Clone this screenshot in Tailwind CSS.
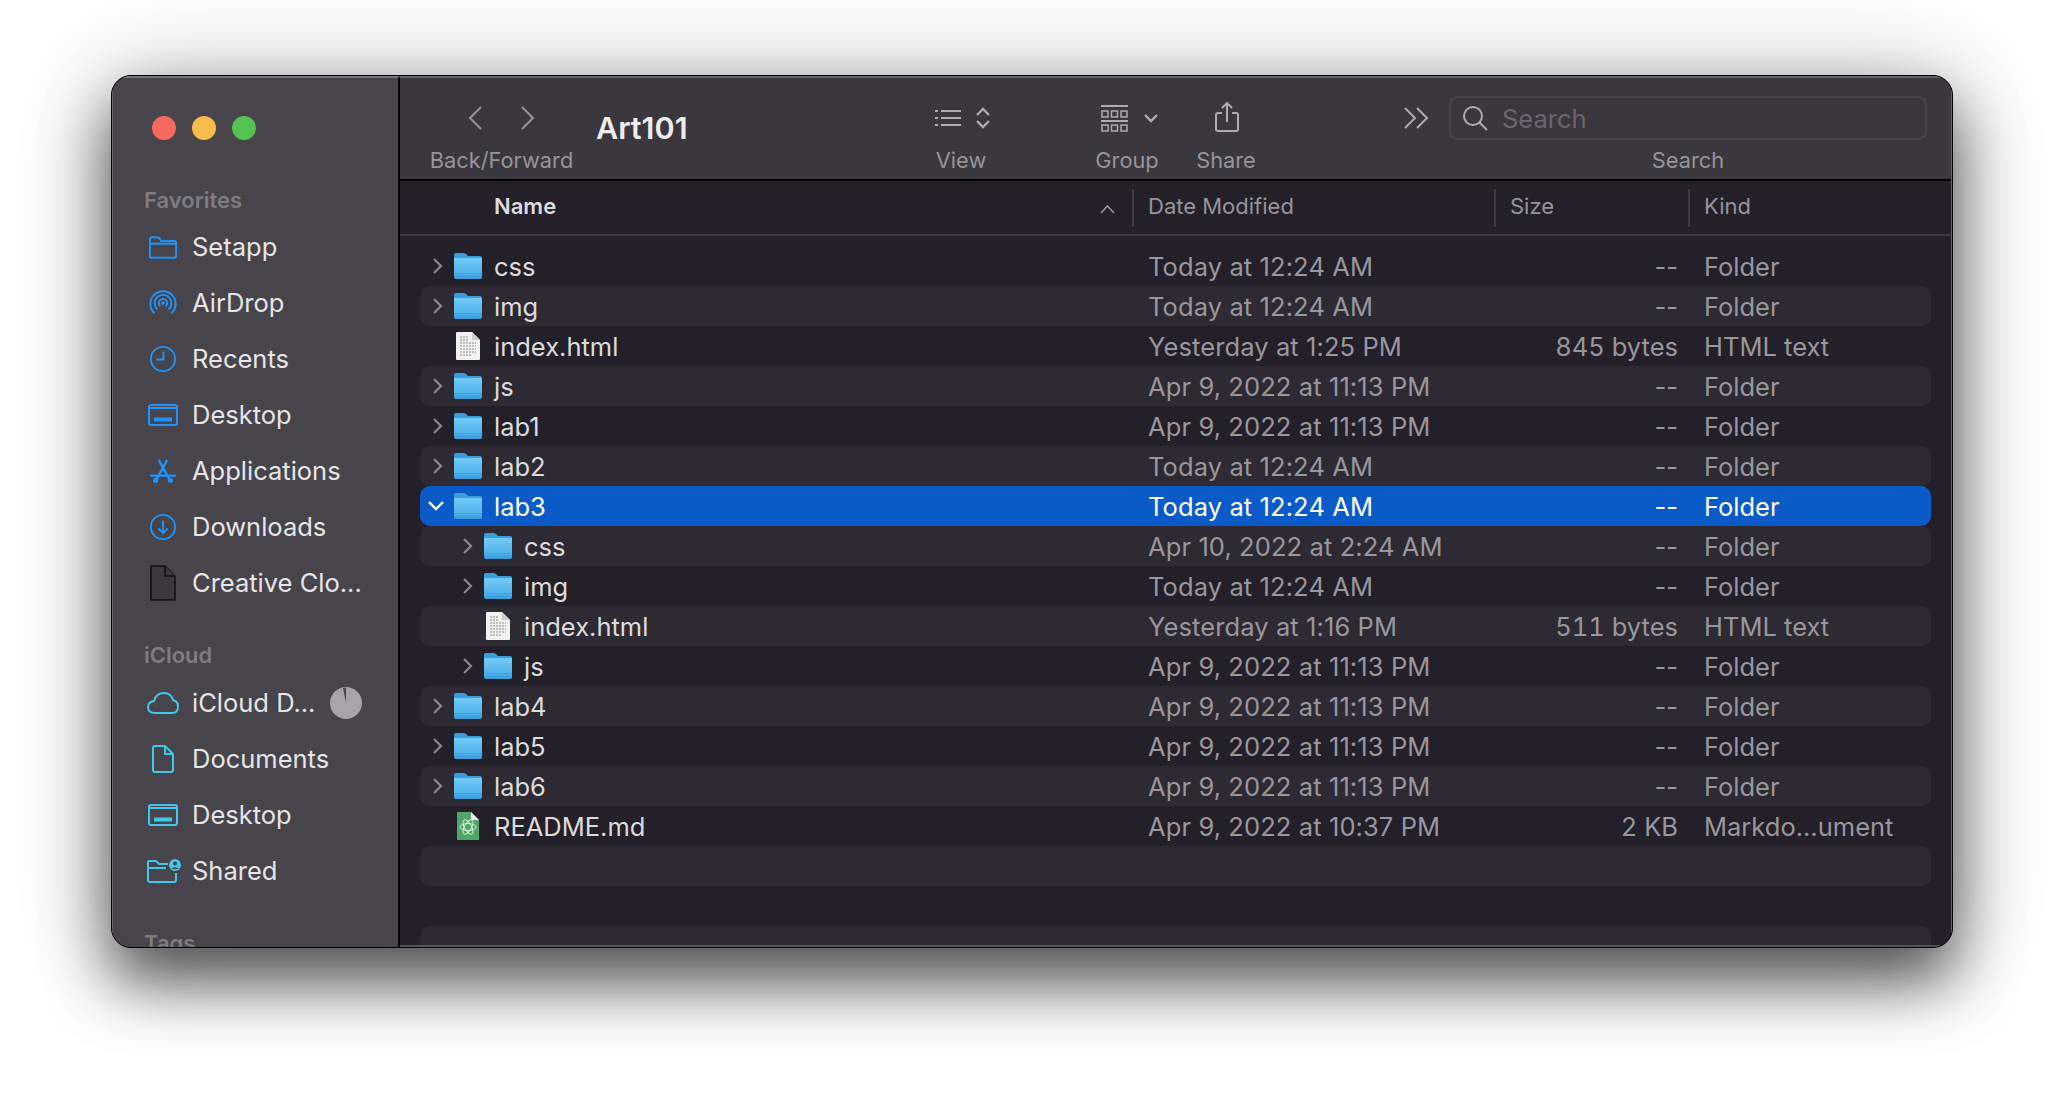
<!DOCTYPE html>
<html lang="en">
<head>
    <meta charset="UTF-8">
    <title>Art101</title>
    <script src="https://cdn.jsdelivr.net/npm/@tailwindcss/browser@4"></script>
</head>
<body class="bg-white font-['Inter',sans-serif] h-screen overflow-hidden">
<svg width="0" height="0" class="absolute">
    <defs>
        <linearGradient id="fold" x1="0" y1="0" x2="0" y2="1">
            <stop offset="0" stop-color="#74cbf7"/>
            <stop offset="0.8" stop-color="#4fb2ec"/>
            <stop offset="1" stop-color="#3a9bd8"/>
        </linearGradient>
        <symbol id="folder" viewBox="0 0 28 26">
            <path d="M0 2q0-2 2-2h7q2 0 3 1l2 2h12q2 0 2 2v4H0z" fill="#3b9fdd"/>
            <path d="M0 5h28v19q0 2-2 2H2q-2 0-2-2z" fill="url(#fold)"/>
            <path d="M0 20.500h28M0 23h28" stroke="#2f8dca" stroke-opacity=".5"/>
        </symbol>
        <symbol id="doc" viewBox="0 0 24 28">
            <path d="M1 0h15l8 8v19q0 1-1 1H1q-1 0-1-1V1q0-1 1-1z" fill="#f1f1f1"/>
            <path d="M16 0l8 8h-8z" fill="#cfcfcf"/>
            <path d="M4 5h9M4 8h9M4 11h16M4 14h16M4 17h16M4 20h16M4 23h12" stroke="#8a8a8a" stroke-width="1.200" stroke-dasharray="2 1"/>
        </symbol>
        <symbol id="md" viewBox="0 0 22 28">
            <path d="M0 0h14l8 8v20H0z" fill="#4ea668"/>
            <path d="M14 0l8 8h-8z" fill="#f0f0f0"/>
            <g fill="none" stroke="#d8eedd" stroke-width="1">
                <ellipse cx="11" cy="15" rx="8" ry="3.500"/>
                <ellipse cx="11" cy="15" rx="8" ry="3.500" transform="rotate(60 11 15)"/>
                <ellipse cx="11" cy="15" rx="8" ry="3.500" transform="rotate(120 11 15)"/>
            </g>
        </symbol>
    </defs>
</svg>

<div class="pt-[75px] pl-[111px]">
    <div class="w-[1842px] h-[873px] rounded-[20px] overflow-hidden flex bg-[#23202a] border border-black shadow-[0_34px_62px_rgba(0,0,0,0.6),0_8px_100px_rgba(0,0,0,0.3)]">

        <!-- sidebar -->
        <aside class="w-[288px] shrink-0 bg-[#47444b] border-r-2 border-black overflow-hidden text-[#e6e5e7] text-[25.5px] border-t-2 border-t-[#77747b] border-l border-l-[#66636a]">
            <div class="flex gap-4 pl-[39px] pt-[38px]">
                <span class="w-6 h-6 rounded-full bg-[#f5695e]"></span>
                <span class="w-6 h-6 rounded-full bg-[#f7bc4b]"></span>
                <span class="w-6 h-6 rounded-full bg-[#55c150]"></span>
            </div>
            <div class="pl-[31px] mt-[45px] h-[30px] leading-[30px] text-[22px] font-semibold text-[#7e7b82]">Favorites</div>
            <ul class="mt-[4px]">
                <li class="h-14 flex items-center pl-[36px] gap-[15px]">
                    <svg class="w-[28px] h-[23px]" viewBox="0 0 30 24" fill="none" stroke="#2094fa" stroke-width="2"><path d="M1 20V3q0-2 2-2h6q1.500 0 2.500 1.500L13 5h14q2 0 2 2v14q0 2-2 2H3q-2 0-2-2zM1 8h28"/></svg>
                    <span class="leading-none">Setapp</span>
                </li>
                <li class="h-14 flex items-center pl-[36px] gap-[15px]">
                    <svg class="w-[28px] h-[28px]" viewBox="0 0 30 30" fill="none" stroke="#2094fa" stroke-width="2"><path d="M6 26A13.500 13.500 0 1 1 24 26M9 22A9 9 0 1 1 21 22M12 18.500A4.500 4.500 0 1 1 18 18.500"/><circle cx="15" cy="15" r="1" fill="#2094fa"/></svg>
                    <span class="leading-none">AirDrop</span>
                </li>
                <li class="h-14 flex items-center pl-[36px] gap-[15px]">
                    <svg class="w-[28px] h-[28px]" viewBox="0 0 30 30" fill="none" stroke="#2094fa" stroke-width="2"><circle cx="15" cy="15" r="13"/><path d="M15.500 7v8.500H8"/></svg>
                    <span class="leading-none">Recents</span>
                </li>
                <li class="h-14 flex items-center pl-[36px] gap-[15px]">
                    <svg class="w-[30px] h-[22px] -ml-px -mr-px" viewBox="0 0 30 22" fill="none" stroke="#2094fa" stroke-width="2"><rect x="1" y="1" width="28" height="20" rx="2"/><path d="M1 4h28"/><path d="M6 15.500h18" stroke-width="4"/></svg>
                    <span class="leading-none">Desktop</span>
                </li>
                <li class="h-14 flex items-center pl-[36px] gap-[15px]">
                    <svg class="w-[28px] h-[24px]" viewBox="0 0 30 26" fill="none" stroke="#2094fa" stroke-width="2.600" stroke-linecap="round"><path d="M11 2l11 20M19 2L8 22M2 18h26"/><circle cx="7" cy="23" r="1.500" fill="#2094fa"/><circle cx="23" cy="23" r="1.500" fill="#2094fa"/></svg>
                    <span class="leading-none">Applications</span>
                </li>
                <li class="h-14 flex items-center pl-[36px] gap-[15px]">
                    <svg class="w-[28px] h-[28px]" viewBox="0 0 30 30" fill="none" stroke="#2094fa" stroke-width="2"><circle cx="15" cy="15" r="13"/><path d="M15 8v13M10 16.500l5 5 5-5"/></svg>
                    <span class="leading-none">Downloads</span>
                </li>
                <li class="h-14 flex items-center pl-[36px] gap-[15px]">
                    <svg class="w-[28px] h-[36px]" viewBox="0 0 28 36" fill="#3b383f" stroke="#111" stroke-width="1.500"><path d="M2 1h14l10 10v24H2z"/><path d="M16 1v10h10"/></svg>
                    <span class="leading-none">Creative Clo...</span>
                </li>
            </ul>
            <div class="pl-[31px] mt-[29px] h-[30px] leading-[30px] text-[22px] font-semibold text-[#7e7b82]">iCloud</div>
            <ul class="mt-[5px]">
                <li class="h-14 flex items-center pl-[36px] gap-[15px]">
                    <svg class="w-[32px] h-[22px] -ml-[2px] -mr-[2px]" viewBox="0 0 32 22" fill="none" stroke="#3fc8ea" stroke-width="2"><path d="M8 21q-7 0-7-6 0-5 6-6 2-8 10-8 7 0 9 7 5 1 5 6.500 0 6.500-6 6.500z"/></svg>
                    <span class="leading-none w-[123px] whitespace-nowrap">iCloud D...</span>
                    <svg class="w-8 h-8" viewBox="0 0 32 32"><circle cx="16" cy="16" r="16" fill="#a6a4a9"/><path d="M13 1l3-.500v15z" fill="#47444b"/></svg>
                </li>
                <li class="h-14 flex items-center pl-[36px] gap-[15px]">
                    <svg class="w-[28px] h-[28px]" viewBox="0 0 28 28" fill="none" stroke="#3fc8ea" stroke-width="2"><path d="M6 1h10l8 8v16q0 2-2 2H6q-2 0-2-2V3q0-2 2-2zM16 1v8h8"/></svg>
                    <span class="leading-none">Documents</span>
                </li>
                <li class="h-14 flex items-center pl-[36px] gap-[15px]">
                    <svg class="w-[30px] h-[22px] -ml-px -mr-px" viewBox="0 0 30 22" fill="none" stroke="#3fc8ea" stroke-width="2"><rect x="1" y="1" width="28" height="20" rx="2"/><path d="M1 4h28"/><path d="M6 15.500h18" stroke-width="4"/></svg>
                    <span class="leading-none">Desktop</span>
                </li>
                <li class="h-14 flex items-center pl-[36px] gap-[15px]">
                    <svg class="w-[34px] h-[24px] -ml-[2px] -mr-[4px]" viewBox="0 0 34 24" fill="none" stroke="#3fc8ea" stroke-width="2"><path d="M20 23H3q-2 0-2-2V3q0-1 1-1h7l3 3h9M1 9h18M29 14v7q0 2-2 2h-7"/><circle cx="28" cy="6" r="6" fill="#3fc8ea" stroke="none"/><circle cx="28" cy="4.500" r="2" fill="#47444b" stroke="none"/><path d="M24 10q4-3.500 8 0z" fill="#47444b" stroke="none"/></svg>
                    <span class="leading-none">Shared</span>
                </li>
            </ul>
            <div class="pl-[31px] mt-[29px] h-[30px] leading-[30px] text-[22px] font-semibold text-[#7e7b82]">Tags</div>
        </aside>

        <main class="flex-1 min-w-0 flex flex-col border-r border-[#66636a]">
            <!-- toolbar -->
            <header class="h-[105px] shrink-0 bg-[#3a373f] border-b-2 border-black border-t-2 border-t-[#66636a] text-[21.8px] text-[#96949a] flex pt-[24px]">
                <div class="w-[143px] ml-[30px] shrink-0 flex flex-col items-center">
                    <div class="flex gap-[39px] h-[32px] items-center">
                        <svg class="w-[14px] h-[24px]" viewBox="0 0 14 24" fill="none" stroke="#96949a" stroke-width="2"><path d="M13 1L2 12l11 11"/></svg>
                        <svg class="w-[14px] h-[24px]" viewBox="0 0 14 24" fill="none" stroke="#96949a" stroke-width="2"><path d="M1 1l11 11L1 23"/></svg>
                    </div>
                    <span class="mt-[13px] leading-[26px] whitespace-nowrap">Back/Forward</span>
                </div>
                <div class="w-[325px] ml-[23px] shrink-0 pt-[6px] text-[30.5px] font-semibold leading-[40px] text-[#eeedee]">Art101</div>
                <div class="w-[80px] shrink-0 flex flex-col items-center">
                    <div class="flex gap-[15px] h-[32px] items-center ml-[2px]">
                        <svg class="w-[26px] h-[18px]" viewBox="0 0 26 18" fill="none" stroke="#aeacb1" stroke-width="2"><path d="M6 2h20M6 9h20M6 16h20M0 2h3M0 9h3M0 16h3"/></svg>
                        <svg class="w-[14px] h-[22px]" viewBox="0 0 14 22" fill="none" stroke="#aeacb1" stroke-width="2.400"><path d="M1 8l6-6 6 6M1 14l6 6 6-6"/></svg>
                    </div>
                    <span class="mt-[13px] leading-[26px]">View</span>
                </div>
                <div class="w-[100px] ml-[76px] shrink-0 flex flex-col items-center">
                    <div class="flex gap-[16px] h-[32px] items-center ml-[5px]">
                        <svg class="w-[27px] h-[27px]" viewBox="0 0 27 27" fill="none" stroke="#aeacb1" stroke-width="1.500"><path d="M0 1h27M0 16h27" stroke-width="2"/><rect x="1" y="6" width="6" height="6"/><rect x="10.500" y="6" width="6" height="6"/><rect x="20" y="6" width="6" height="6"/><rect x="1" y="20" width="6" height="6"/><rect x="10.500" y="20" width="6" height="6"/><rect x="20" y="20" width="6" height="6"/></svg>
                        <svg class="w-[14px] h-[9px]" viewBox="0 0 14 9" fill="none" stroke="#aeacb1" stroke-width="2.400"><path d="M1 1l6 6 6-6"/></svg>
                    </div>
                    <span class="mt-[13px] leading-[26px]">Group</span>
                </div>
                <div class="w-[80px] ml-[9px] shrink-0 flex flex-col items-center">
                    <div class="h-[32px] flex items-center">
                        <svg class="w-[24px] h-[30px] ml-[2px] -mt-[3px]" viewBox="0 0 24 30" fill="none" stroke="#aeacb1" stroke-width="2"><path d="M7 11H3q-2 0-2 2v14q0 2 2 2h18q2 0 2-2V13q0-2-2-2h-4M12 20V2M7 6l5-5 5 5"/></svg>
                    </div>
                    <span class="mt-[13px] leading-[26px]">Share</span>
                </div>
                <div class="ml-[138px] w-[25px] h-[32px] shrink-0 flex items-center">
                    <svg class="w-[25px] h-[22px]" viewBox="0 0 25 22" fill="none" stroke="#aeacb1" stroke-width="2"><path d="M1 1l10 10L1 21M13 1l10 10-10 10"/></svg>
                </div>
                <div class="ml-[20px] w-[478px] shrink-0 flex flex-col items-center -mt-[6px]">
                    <div class="w-full h-[44px] rounded-[9px] border-2 border-[#47444c] flex items-center pl-[11px] gap-[14px]">
                        <svg class="w-[26px] h-[26px] -mt-px" viewBox="0 0 26 26" fill="none" stroke="#aeacb1" stroke-width="2"><circle cx="11" cy="11" r="9"/><path d="M17.500 17.500L25 25"/></svg>
                        <span class="text-[25.5px] text-[#696670] leading-none pt-[2px]">Search</span>
                    </div>
                    <span class="mt-[7px] leading-[26px]">Search</span>
                </div>
            </header>

            <!-- column headers -->
            <div class="h-[55px] shrink-0 border-b-2 border-[#3d3a42] text-[22px] text-[#96949a] flex items-center">
                <span class="w-[640px] pl-[94px] pb-[2px] shrink-0 font-semibold text-[#dcdbdd]">Name</span>
                <svg class="w-[15px] h-[9px] ml-[60px] shrink-0 mt-[3px]" viewBox="0 0 15 9" fill="none" stroke="#96949a" stroke-width="1.600"><path d="M1 8l6.500-7L14 8"/></svg>
                <span class="w-[2px] h-[38px] bg-[#3d3a42] ml-[17px] shrink-0"></span>
                <span class="w-[360px] pl-[14px] pb-[2px] shrink-0">Date Modified</span>
                <span class="w-[2px] h-[38px] bg-[#3d3a42] shrink-0"></span>
                <span class="w-[192px] pl-[14px] pb-[2px] shrink-0">Size</span>
                <span class="w-[2px] h-[38px] bg-[#3d3a42] shrink-0"></span>
                <span class="pl-[14px] pb-[2px]">Kind</span>
            </div>

            <!-- rows, filled in below -->
            <div id="rows" class="flex-1 min-h-0 overflow-hidden px-5 pt-[10px] text-[25.5px] text-[#99979d] border-b-2 border-[#55525a]"></div>
        </main>
    </div>
</div>

<script>
    const today = "Today at 12:24 AM";
    const apr9 = "Apr 9, 2022 at 11:13 PM";
    const files = [
        ["css", 0, "folder", today, "--", "Folder"],
        ["img", 0, "folder", today, "--", "Folder"],
        ["index.html", 0, "doc", "Yesterday at 1:25 PM", "845 bytes", "HTML text"],
        ["js", 0, "folder", apr9, "--", "Folder"],
        ["lab1", 0, "folder", apr9, "--", "Folder"],
        ["lab2", 0, "folder", today, "--", "Folder"],
        ["lab3", 0, "open", today, "--", "Folder"],
        ["css", 1, "folder", "Apr 10, 2022 at 2:24 AM", "--", "Folder"],
        ["img", 1, "folder", today, "--", "Folder"],
        ["index.html", 1, "doc", "Yesterday at 1:16 PM", "511 bytes", "HTML text"],
        ["js", 1, "folder", apr9, "--", "Folder"],
        ["lab4", 0, "folder", apr9, "--", "Folder"],
        ["lab5", 0, "folder", apr9, "--", "Folder"],
        ["lab6", 0, "folder", apr9, "--", "Folder"],
        ["README.md", 0, "md", "Apr 9, 2022 at 10:37 PM", "2 KB", "Markdo...ument"],
    ];

    const rows = document.getElementById('rows');
    const chevronRight = `<svg class="w-[10px] h-[16px]" viewBox="0 0 10 16" fill="none" stroke="#8a888e" stroke-width="2.200"><path d="M1 1l7 7-7 7"/></svg>`;
    const chevronDown = `<svg class="w-[16px] h-[10px] -ml-[4px]" viewBox="0 0 16 10" fill="none" stroke="#ffffff" stroke-width="2.400"><path d="M1 1l7 7 7-7"/></svg>`;
    const icons = {
        folder: `<svg class="w-[28px] h-[26px]"><use href="#folder"/></svg>`,
        open: `<svg class="w-[28px] h-[26px]"><use href="#folder"/></svg>`,
        doc: `<svg class="w-[24px] h-[28px]"><use href="#doc"/></svg>`,
        md: `<svg class="w-[22px] h-[28px]"><use href="#md"/></svg>`,
    };

    for (let i = 0; i < 18; i++) {
        const row = document.createElement('div');
        const f = files[i];
        let look = i % 2 == 1 ? "bg-[#2d2a33]" : "";
        if (i == 6) look = "bg-[#0a5bc8] text-white";
        row.className = `h-10 rounded-[10px] flex items-center ${look}`;
        if (f) {
            const isFolder = f[2] == "folder" || f[2] == "open";
            const chevron = f[2] == "open" ? chevronDown : isFolder ? chevronRight : "";
            const nameColor = i == 6 ? "text-white" : "text-[#dcdbdd]";
            const sizeDigits = f[4] == "--" ? "" : "tabular-nums";
            row.innerHTML = `
                <div class="w-[728px] shrink-0 flex items-center ${f[1] ? 'pl-[40px]' : 'pl-[10px]'}">
                    <span class="w-[16px] flex justify-center shrink-0">${chevron}</span>
                    <span class="w-[28px] ml-[8px] flex justify-center shrink-0">${icons[f[2]]}</span>
                    <span class="ml-[12px] pt-[2px] whitespace-nowrap ${nameColor}">${f[0]}</span>
                </div>
                <span class="w-[405px] pt-[2px] shrink-0 whitespace-nowrap tracking-[0.1px]">${f[3]}</span>
                <span class="w-[125px] pt-[2px] shrink-0 text-right whitespace-nowrap ${sizeDigits}">${f[4]}</span>
                <span class="pl-[26px] pt-[2px] whitespace-nowrap">${f[5]}</span>
            `;
        }
        rows.appendChild(row);
    }
</script>
</body>
</html>
